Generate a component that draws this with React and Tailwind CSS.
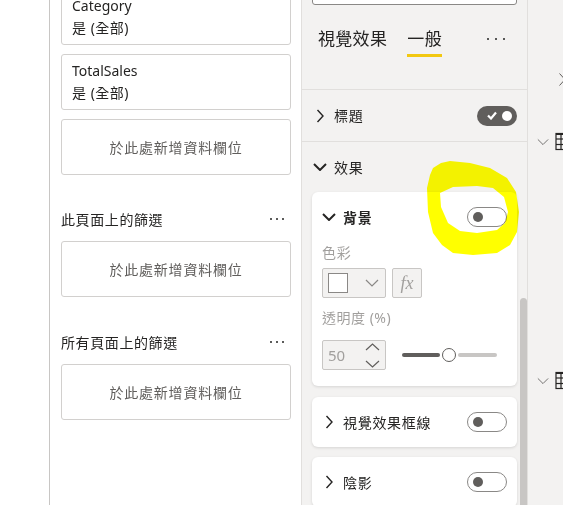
import React from "react";

const font = "font-['Noto_Sans','Noto_Sans_CJK_TC',sans-serif]";

function ChevronRight({ className = "", w = 8, h = 14, sw = 1.4 }) {
  return (
    <svg width={w} height={h} viewBox="0 0 8 14" className={className} fill="none">
      <polyline points="1.5,1 7,7 1.5,13" stroke="currentColor" strokeWidth={sw} />
    </svg>
  );
}

function ChevronDown({ className = "", w = 14, h = 8, sw = 2 }) {
  return (
    <svg width={w} height={h} viewBox="0 0 14 8" className={className} fill="none">
      <polyline points="1,1 7,7 13,1" stroke="currentColor" strokeWidth={sw} />
    </svg>
  );
}

function Dots({ gap = "gap-[4px]" }) {
  return (
    <div className={`flex items-center ${gap}`}>
      <span className="h-[2px] w-[2px] rounded-full bg-[#252423]" />
      <span className="h-[2px] w-[2px] rounded-full bg-[#252423]" />
      <span className="h-[2px] w-[2px] rounded-full bg-[#252423]" />
    </div>
  );
}

function ToggleOn() {
  return (
    <div className="flex h-[20px] w-[40px] items-center justify-between rounded-full bg-[#605e5c] pl-[10px] pr-[5px]">
      <svg width="10" height="9" viewBox="0 0 10 9" fill="none">
        <polyline points="1,4.5 4,7.5 9,1.5" stroke="white" strokeWidth="2.2" />
      </svg>
      <span className="h-[10px] w-[10px] rounded-full bg-white" />
    </div>
  );
}

function ToggleOff() {
  return (
    <div className="flex h-[20px] w-[40px] items-center rounded-full border border-[#8a8886] bg-white pl-[5px]">
      <span className="h-[10px] w-[10px] rounded-full bg-[#605e5c]" />
    </div>
  );
}

function FilterCard({ title }) {
  return (
    <div className="h-[56px] rounded-[3px] border border-[#d2d0ce] pl-[10px] pt-[5px] leading-[22px] text-[14px] text-[#252423]">
      <div>{title}</div>
      <div className="tracking-[0.5px]">是 (全部)</div>
    </div>
  );
}

function DropCard() {
  return (
    <div className="flex h-[56px] items-center justify-center rounded-[3px] border border-[#d2d0ce] text-[14px] tracking-[0.8px] text-[#605e5c]">
      於此處新增資料欄位
    </div>
  );
}

function FilterHeader({ label }) {
  return (
    <div className="mb-[11px] flex h-[22px] items-center justify-between pr-[7px] text-[14px] tracking-[0.6px] text-[#252423]">
      <span>{label}</span>
      <Dots />
    </div>
  );
}

function CollapsedCard({ label, mt }) {
  return (
    <div className={`${mt} flex h-[50px] shrink-0 items-center rounded-[6px] bg-white px-[10px] shadow-[0_1px_3px_rgba(0,0,0,0.12)]`}>
      <span className="flex w-[14px] justify-center text-[#252423]">
        <ChevronRight />
      </span>
      <span className="ml-[7px] text-[14px] tracking-[0.7px] text-[#252423]">{label}</span>
      <span className="ml-auto">
        <ToggleOff />
      </span>
    </div>
  );
}

function TableIcon() {
  return (
    <svg width="14" height="19" viewBox="0 0 14 19" fill="none" stroke="#252423" strokeWidth="1.2">
      <rect x="1" y="1.5" width="14" height="16" />
      <line x1="1" y1="2" x2="14" y2="2" strokeWidth="2" />
      <line x1="6" y1="1.5" x2="6" y2="17.5" />
      <line x1="1" y1="7" x2="14" y2="7" />
      <line x1="1" y1="12.5" x2="14" y2="12.5" />
    </svg>
  );
}

export default function App() {
  return (
    <div className={`relative flex h-[505px] w-[563px] overflow-hidden bg-white ${font}`}>
      {/* far left strip */}
      <div className="w-[50px] shrink-0 border-r border-[#c8c6c4] bg-white" />

      {/* filters column */}
      <div className="flex w-[251px] shrink-0 flex-col bg-white pl-[11px] pr-[10px]">
        <div className="mt-[-11px] flex flex-col gap-[9px]">
          <FilterCard title="Category" />
          <FilterCard title="TotalSales" />
          <DropCard />
        </div>
        <div className="mt-[33px]">
          <FilterHeader label="此頁面上的篩選" />
          <DropCard />
        </div>
        <div className="mt-[34px]">
          <FilterHeader label="所有頁面上的篩選" />
          <DropCard />
        </div>
      </div>

      {/* format pane */}
      <div className="relative flex w-[227px] shrink-0 flex-col border-x border-[#e1dfdd] bg-[#f3f2f1]">
        <div className="mx-[10px] mt-[-25px] h-[30px] shrink-0 rounded-[3px] border border-[#8a8886] bg-white" />

        <div className="flex h-[85px] shrink-0 items-start border-b border-[#e1dfdd] pl-[16px] pr-[22px] pt-[22px]">
          <div className="text-[17px] leading-[24px] tracking-[0.3px] text-[#252423]">視覺效果</div>
          <div className="ml-[20px] flex flex-col">
            <div className="text-[17px] leading-[24px] tracking-[0.5px] text-[#252423]">一般</div>
            <div className="mt-[3px] h-[3px] bg-[#f2c811]" />
          </div>
          <div className="ml-auto flex h-[24px] items-center">
            <Dots gap="gap-[6px]" />
          </div>
        </div>

        <div className="flex h-[52px] shrink-0 items-center border-b border-[#e1dfdd] pl-[11px] pr-[10px]">
          <span className="flex w-[14px] justify-center text-[#252423]">
            <ChevronRight />
          </span>
          <span className="ml-[7px] text-[14px] tracking-[0.7px] text-[#252423]">標題</span>
          <span className="ml-auto">
            <ToggleOn />
          </span>
        </div>

        <div className="flex flex-col px-[10px] pt-[13px]">
          <div className="flex h-[24px] items-center pl-[1px]">
            <span className="flex w-[14px] justify-center text-[#252423]">
              <ChevronDown />
            </span>
            <span className="ml-[7px] text-[14px] tracking-[0.7px] text-[#252423]">效果</span>
          </div>

          <div className="mt-[13px] flex h-[194px] shrink-0 flex-col rounded-[6px] bg-white px-[10px] pt-[15px] shadow-[0_1px_3px_rgba(0,0,0,0.12)]">
            <div className="flex h-[20px] items-center">
              <span className="flex w-[14px] justify-center text-[#252423]">
                <ChevronDown />
              </span>
              <span className="ml-[7px] text-[14px] font-semibold tracking-[0.7px] text-[#252423]">背景</span>
              <span className="ml-auto">
                <ToggleOff />
              </span>
            </div>

            <div className="mt-[16px] h-[20px] text-[14px] leading-[20px] tracking-[0.7px] text-[#a19f9d]">色彩</div>
            <div className="mt-[5px] flex h-[30px] items-center">
              <div className="flex h-[30px] w-[64px] items-center rounded-[2px] border border-[#c8c6c4] bg-[#f3f2f1] pl-[5px]">
                <span className="h-[20px] w-[20px] border border-[#8a8886] bg-white" />
                <ChevronDown className="ml-[17px] text-[#8a8886]" w={14} h={8} sw={1.2} />
              </div>
              <div className="ml-[6px] flex h-[30px] w-[30px] items-center justify-center rounded-[2px] border border-[#c8c6c4] bg-[#f3f2f1] font-['Liberation_Serif',serif] text-[18px] italic text-[#a19f9d]">
                fx
              </div>
            </div>

            <div className="mt-[10px] h-[20px] text-[14px] leading-[20px] tracking-[0.5px] text-[#a19f9d]">透明度 (%)</div>
            <div className="mt-[12px] flex h-[30px] items-center">
              <div className="flex h-[30px] w-[64px] items-center rounded-[2px] border border-[#c8c6c4] bg-[#f3f2f1] pl-[5px]">
                <span className="text-[15px] text-[#a19f9d]">50</span>
                <div className="ml-auto mr-[5px] flex flex-col gap-[9px]">
                  <svg width="15" height="8" viewBox="0 0 15 8" fill="none">
                    <polyline points="1,7 7.5,1 14,7" stroke="#605e5c" strokeWidth="1.2" />
                  </svg>
                  <svg width="15" height="8" viewBox="0 0 15 8" fill="none">
                    <polyline points="1,1 7.5,7 14,1" stroke="#605e5c" strokeWidth="1.2" />
                  </svg>
                </div>
              </div>
              <div className="ml-[16px] flex items-center">
                <span className="h-[4px] w-[38px] rounded-full bg-[#605e5c]" />
                <span className="ml-[2px] h-[14px] w-[14px] rounded-full border-[1.5px] border-[#605e5c] bg-white" />
                <span className="ml-[2px] h-[4px] w-[39px] rounded-full bg-[#c8c6c4]" />
              </div>
            </div>
          </div>

          <CollapsedCard label="視覺效果框線" mt="mt-[11px]" />
          <CollapsedCard label="陰影" mt="mt-[10px]" />
        </div>

        {/* scrollbar thumb */}
        <div className="absolute bottom-0 right-0 top-[298px] w-[7px] rounded-t-full bg-[#c8c6c4]" />
      </div>

      {/* right pane edge */}
      <div className="flex flex-1 flex-col bg-[#f3f2f1] pl-[9px]">
        <div className="ml-[21px] mt-[72px] text-[#605e5c]">
          <ChevronRight w={8} h={15} sw={1} />
        </div>
        <div className="mt-[45px] flex h-[19px] items-center gap-[6px]">
          <ChevronDown className="text-[#605e5c]" w={12} h={8} sw={1} />
          <TableIcon />
        </div>
        <div className="mt-[220px] flex h-[19px] items-center gap-[6px]">
          <ChevronDown className="text-[#605e5c]" w={12} h={8} sw={1} />
          <TableIcon />
        </div>
      </div>

      {/* hand-drawn highlighter ring */}
      <svg
        className="pointer-events-none absolute left-0 top-0 mix-blend-multiply"
        width="563"
        height="505"
        viewBox="0 0 563 505"
      >
        <path
          fillRule="evenodd"
          fill="#ffff00"
          d="M433 168 L441 163 L450 161 L470 163 L490 168 L507 178 L516 192 L519 212 L517 232 L510 245 L497 253 L473 255 L453 253 L442 245 L433 233 L428 212 L427 188 L430 175 Z
             M440 193 L453 187 L477 186 L493 188 L504 197 L508 212 L505 223 L497 230 L477 233 L460 231 L448 223 L441 207 Z"
        />
      </svg>
    </div>
  );
}
